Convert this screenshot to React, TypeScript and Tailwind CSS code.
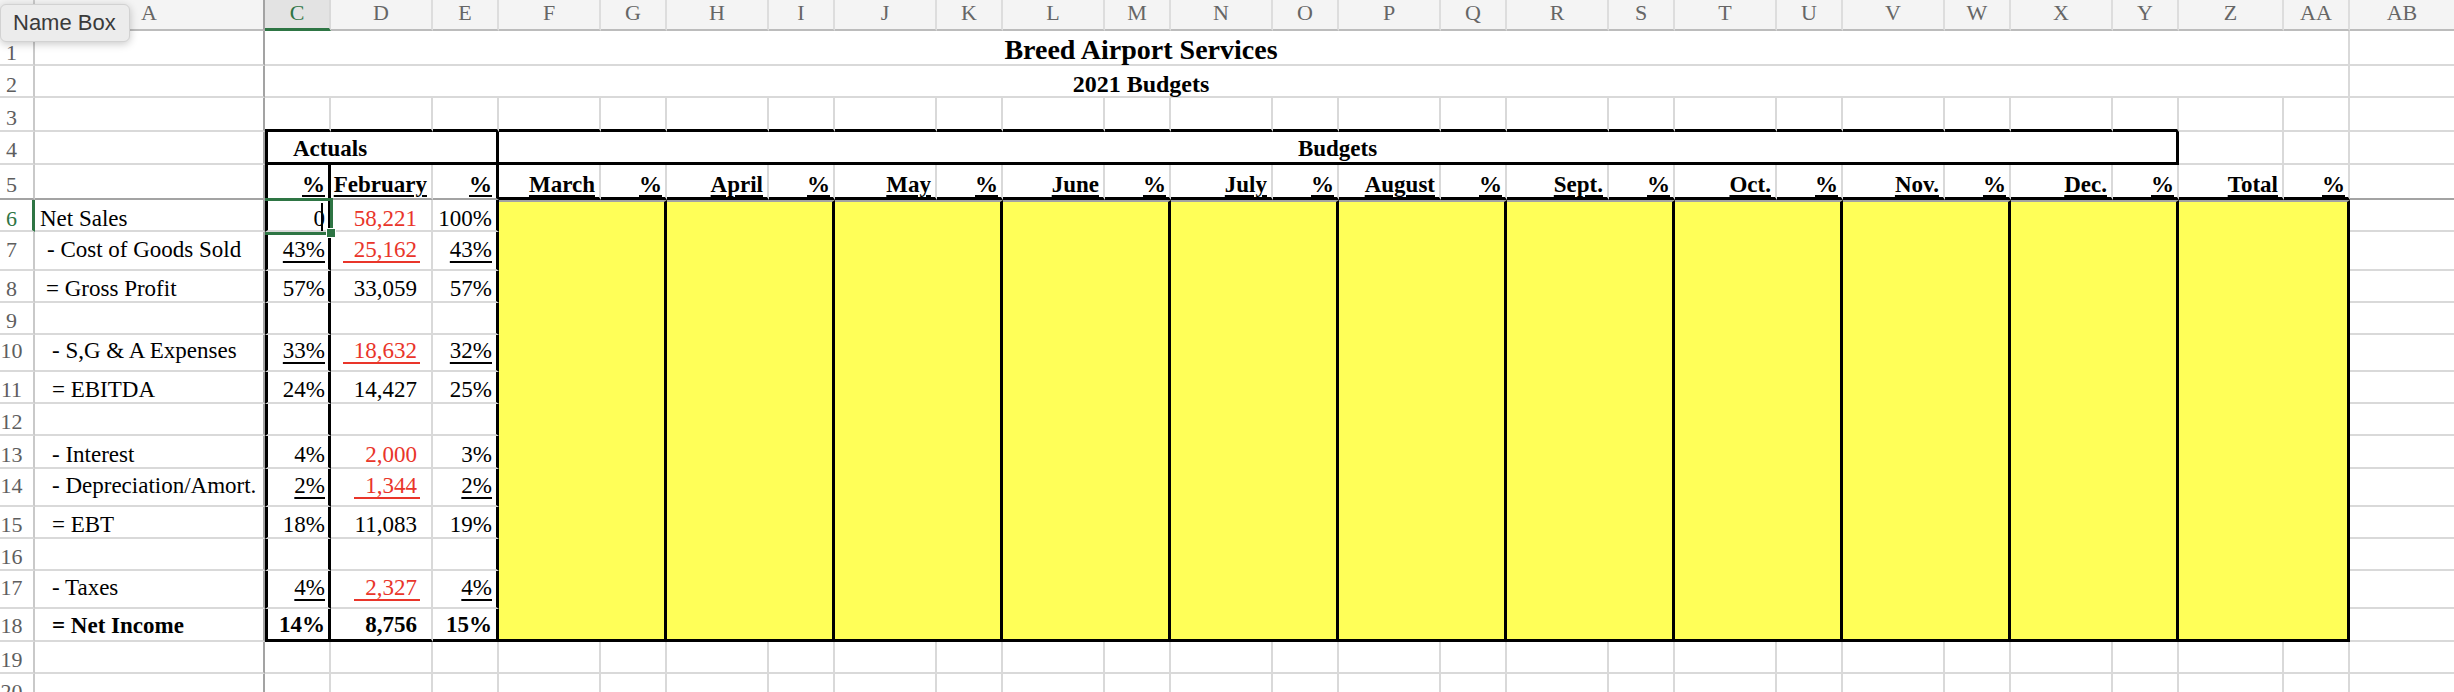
import React from "react";

/* ===========================================================
   Sheet constants
   =========================================================== */
const SERIF = "font-['Liberation_Serif','Times_New_Roman',serif]";

const LETTERS = [
  "A", "C", "D", "E", "F", "G", "H", "I", "J", "K", "L", "M", "N", "O",
  "P", "Q", "R", "S", "T", "U", "V", "W", "X", "Y", "Z", "AA", "AB",
];

const MONTHS = [
  "March", "April", "May", "June", "July", "August",
  "Sept.", "Oct.", "Nov.", "Dec.", "Total",
];

// gridlines / borders
const GR = "border-r-2 border-r-[#d9d9d9]";
const GB = "border-b-2 border-b-[#d9d9d9]";
const FR = "border-r-2 border-r-[#a3a3a3]";
const FB = "border-b-2 border-b-[#a3a3a3]";
const KB = "border-b-[3px] border-b-black";
const KR = "border-r-[3px] border-r-black";
const KL = "border-l-[3px] border-l-black";

const RED = "text-[#e9352a]";

// bottom padding per row (Excel bottom-aligns text)
const PB: Record<number, string> = {
  1: "pb-0",
  2: "pb-0",
  3: "pb-[1px]",
  4: "pb-[2px]",
  5: "pb-[2px]",
  6: "pb-0",
  7: "pb-[8px]",
  8: "pb-[1px]",
  9: "pb-[1px]",
  10: "pb-[8px]",
  11: "pb-[1px]",
  12: "pb-[1px]",
  13: "pb-[1px]",
  14: "pb-[8px]",
  15: "pb-[1px]",
  16: "pb-[1px]",
  17: "pb-[8px]",
  18: "pb-[3px]",
  19: "pb-[1px]",
  20: "pb-[1px]",
};

type Line = {
  row: number;
  label?: string;
  pl?: string;
  c?: string;
  d?: string;
  e?: string;
  red?: boolean;
  u?: boolean;
  bold?: boolean;
};

const LINES: Line[] = [
  { row: 6, label: "Net Sales", pl: "pl-[5px]", c: "0", d: "58,221", e: "100%", red: true },
  { row: 7, label: "- Cost of Goods Sold", pl: "pl-[12px]", c: "43%", d: "25,162", e: "43%", red: true, u: true },
  { row: 8, label: "= Gross Profit", pl: "pl-[11px]", c: "57%", d: "33,059", e: "57%" },
  { row: 9 },
  { row: 10, label: "- S,G & A Expenses", pl: "pl-[17px]", c: "33%", d: "18,632", e: "32%", red: true, u: true },
  { row: 11, label: "= EBITDA", pl: "pl-[17px]", c: "24%", d: "14,427", e: "25%" },
  { row: 12 },
  { row: 13, label: "- Interest", pl: "pl-[17px]", c: "4%", d: "2,000", e: "3%", red: true },
  { row: 14, label: "- Depreciation/Amort.", pl: "pl-[17px]", c: "2%", d: "1,344", e: "2%", red: true, u: true },
  { row: 15, label: "= EBT", pl: "pl-[17px]", c: "18%", d: "11,083", e: "19%" },
  { row: 16 },
  { row: 17, label: "- Taxes", pl: "pl-[17px]", c: "4%", d: "2,327", e: "4%", red: true, u: true },
  { row: 18, label: "= Net Income", pl: "pl-[17px]", c: "14%", d: "8,756", e: "15%", bold: true },
];

/* ===========================================================
   Pieces
   =========================================================== */
function RowHead({ n }: { n: number }) {
  const sel = n === 6;
  return (
    <div
      className={`flex items-end bg-white ${n === 5 ? FB : GB} ${
        sel ? "border-r-[3px] border-r-[#2e7544]" : "border-r-2 border-r-[#c9c9c9]"
      } ${PB[n]}`}
    >
      <span
        className={`w-[23px] text-center text-[22px] leading-none ${
          sel ? "text-[#2e7544]" : "text-[#5e5e5e]"
        }`}
      >
        {n}
      </span>
    </div>
  );
}

function HeaderRow() {
  return (
    <>
      <div className="border-r-2 border-b-2 border-r-[#c9c9c9] border-b-[#bcbcbc] bg-[#f3f3f3]" />
      {LETTERS.map((l) => {
        if (l === "C")
          return (
            <div
              key={l}
              className={`flex justify-center border-b-[3px] border-b-[#2e7544] bg-[#e3e3e3] pt-[2px] text-[22px] leading-none text-[#2e7544] ${GR}`}
            >
              {l}
            </div>
          );
        return (
          <div
            key={l}
            className={`flex justify-center border-b-2 border-b-[#bcbcbc] bg-[#f4f4f4] pt-[2px] text-[22px] leading-none text-[#666666] ${
              l === "A" ? FR : l === "AB" ? "" : "border-r-2 border-r-[#dddddd]"
            }`}
          >
            {l}
          </div>
        );
      })}
    </>
  );
}

function TitleRow({ n, text, size }: { n: number; text: string; size: string }) {
  return (
    <>
      <RowHead n={n} />
      <div className={`${FR} ${GB}`} />
      <div className={`col-span-25 flex items-end justify-center pr-[331px] ${GR} ${GB} ${PB[n]}`}>
        <span className={`${size} font-bold leading-none whitespace-nowrap`}>{text}</span>
      </div>
      <div className={GB} />
    </>
  );
}

function BlankRow({ n, topOfBox }: { n: number; topOfBox?: boolean }) {
  // C..AA = 25 cells
  return (
    <>
      <RowHead n={n} />
      <div className={`${FR} ${GB}`} />
      {LETTERS.slice(1, 26).map((l, i) => (
        <div key={l} className={`${GR} ${topOfBox && i < 23 ? KB : GB}`} />
      ))}
      <div className={GB} />
    </>
  );
}

function BoxRow() {
  return (
    <>
      <RowHead n={4} />
      <div className={`${FR} ${GB}`} />
      <div className={`col-span-3 flex items-end pl-[25px] ${KL} ${KR} ${KB} ${PB[4]}`}>
        <span className="text-[23px] font-bold leading-none">Actuals</span>
      </div>
      <div className={`col-span-20 flex items-end justify-center ${KR} ${KB} ${PB[4]}`}>
        <span className="text-[23px] font-bold leading-none">Budgets</span>
      </div>
      <div className={`${GR} ${GB}`} />
      <div className={`${GR} ${GB}`} />
      <div className={GB} />
    </>
  );
}

const HEAD_TXT = "text-[23px] font-bold leading-none underline decoration-2 underline-offset-[3px]";

function ColumnTitles() {
  return (
    <>
      <RowHead n={5} />
      <div className={`${FR} ${FB}`} />
      <div className={`flex items-end justify-end pr-[3px] ${KL} ${KR} ${FB} ${PB[5]}`}>
        <span className={HEAD_TXT}>%</span>
      </div>
      <div className={`flex items-end justify-end pr-[4px] ${GR} ${FB} ${PB[5]}`}>
        <span className={HEAD_TXT}>February</span>
      </div>
      <div className={`flex items-end justify-end pr-[4px] ${KR} ${FB} ${PB[5]}`}>
        <span className={HEAD_TXT}>%</span>
      </div>
      {MONTHS.map((m) => (
        <React.Fragment key={m}>
          <div className={`flex items-end justify-end pr-[4px] ${GR} ${KB} pb-[1px]`}>
            <span className={HEAD_TXT}>{m}</span>
          </div>
          <div className={`flex items-end justify-end pr-[3px] ${GR} ${KB} pb-[1px]`}>
            <span className={HEAD_TXT}>%</span>
          </div>
        </React.Fragment>
      ))}
      <div className={FB} />
    </>
  );
}

function BodyRow({ line }: { line: Line }) {
  const last = line.row === 18;
  const bottom = last ? KB : GB;
  const pb = PB[line.row];
  const wt = line.bold ? "font-bold" : "";
  const ul = line.u ? "underline decoration-2 underline-offset-[4px]" : "";

  return (
    <>
      <RowHead n={line.row} />
      <div className={`flex items-end ${FR} ${GB} ${pb} ${line.pl ?? ""}`}>
        <span className={`text-[23px] leading-none whitespace-nowrap ${wt}`}>{line.label}</span>
      </div>

      {/* C */}
      {line.row === 6 ? (
        <div className={`relative flex items-end justify-end pr-[3px] ${KL} ${KR} ${GB} ${pb}`}>
          <span className="relative text-[23px] leading-none">
            0
            <span className="absolute right-[2px] top-[-4px] h-[28px] w-[2px] bg-black" />
          </span>
          <div className="pointer-events-none absolute -top-[2px] -left-[3px] -right-[5px] -bottom-[5px] border-[3px] border-l-0 border-[#2e7544]" />
          <div className="absolute -right-[8px] -bottom-[8px] h-[10px] w-[10px] border border-white bg-[#2e7544]" />
        </div>
      ) : (
        <div className={`flex items-end justify-end pr-[3px] ${KL} ${KR} ${bottom} ${pb}`}>
          <span className={`text-[23px] leading-none ${wt} ${ul}`}>{line.c}</span>
        </div>
      )}

      {/* D */}
      <div className={`flex items-end justify-end pr-[11px] ${GR} ${bottom} ${pb}`}>
        {line.d && (
          <span
            className={`-mb-[2px] inline-block border-b-2 pl-[11px] pr-[3px] text-[23px] leading-none ${wt} ${
              line.red ? RED : ""
            } ${line.u ? "border-b-[#e9352a]" : "border-b-transparent"}`}
          >
            {line.d}
          </span>
        )}
      </div>

      {/* E */}
      <div className={`flex items-end justify-end pr-[4px] ${KR} ${bottom} ${pb}`}>
        <span className={`text-[23px] leading-none ${wt} ${ul}`}>{line.e}</span>
      </div>

      {/* yellow budget blocks */}
      {line.row === 6 &&
        MONTHS.map((m) => (
          <div
            key={m}
            className="col-span-2 row-span-13 border-t-2 border-r-[3px] border-b-[3px] border-t-[#a3a3a3] border-r-black border-b-black bg-[#ffff58]"
          />
        ))}

      <div className={GB} />
    </>
  );
}

function NameBox() {
  return (
    <div className="absolute left-0 top-[4px] flex h-[38px] w-[130px] items-center rounded-[6px] border border-[#d2d2d2] bg-[#ececec] pl-[12px] font-['Liberation_Sans',Arial,sans-serif] text-[22px] leading-none text-[#3a3a3a] shadow-[0_2px_8px_rgba(0,0,0,0.22)]">
      Name Box
    </div>
  );
}

/* ===========================================================
   App
   =========================================================== */
export default function App() {
  return (
    <div className={`relative h-[692px] w-[2454px] overflow-hidden bg-white text-black ${SERIF}`}>
      <div className="grid grid-cols-[35px_230px_66px_102px_66px_repeat(10,102px_66px)_105px_66px_1fr] grid-rows-[31px_35px_32px_34px_33px_35px_32px_39px_32px_32px_37px_32px_32px_33px_38px_32px_32px_38px_33px_32px_32px]">
        <HeaderRow />
        <TitleRow n={1} text="Breed Airport Services" size="text-[28px]" />
        <TitleRow n={2} text="2021 Budgets" size="text-[24px]" />
        <BlankRow n={3} topOfBox />
        <BoxRow />
        <ColumnTitles />
        {LINES.map((line) => (
          <BodyRow key={line.row} line={line} />
        ))}
        <BlankRow n={19} />
        <BlankRow n={20} />
      </div>
      <NameBox />
    </div>
  );
}
